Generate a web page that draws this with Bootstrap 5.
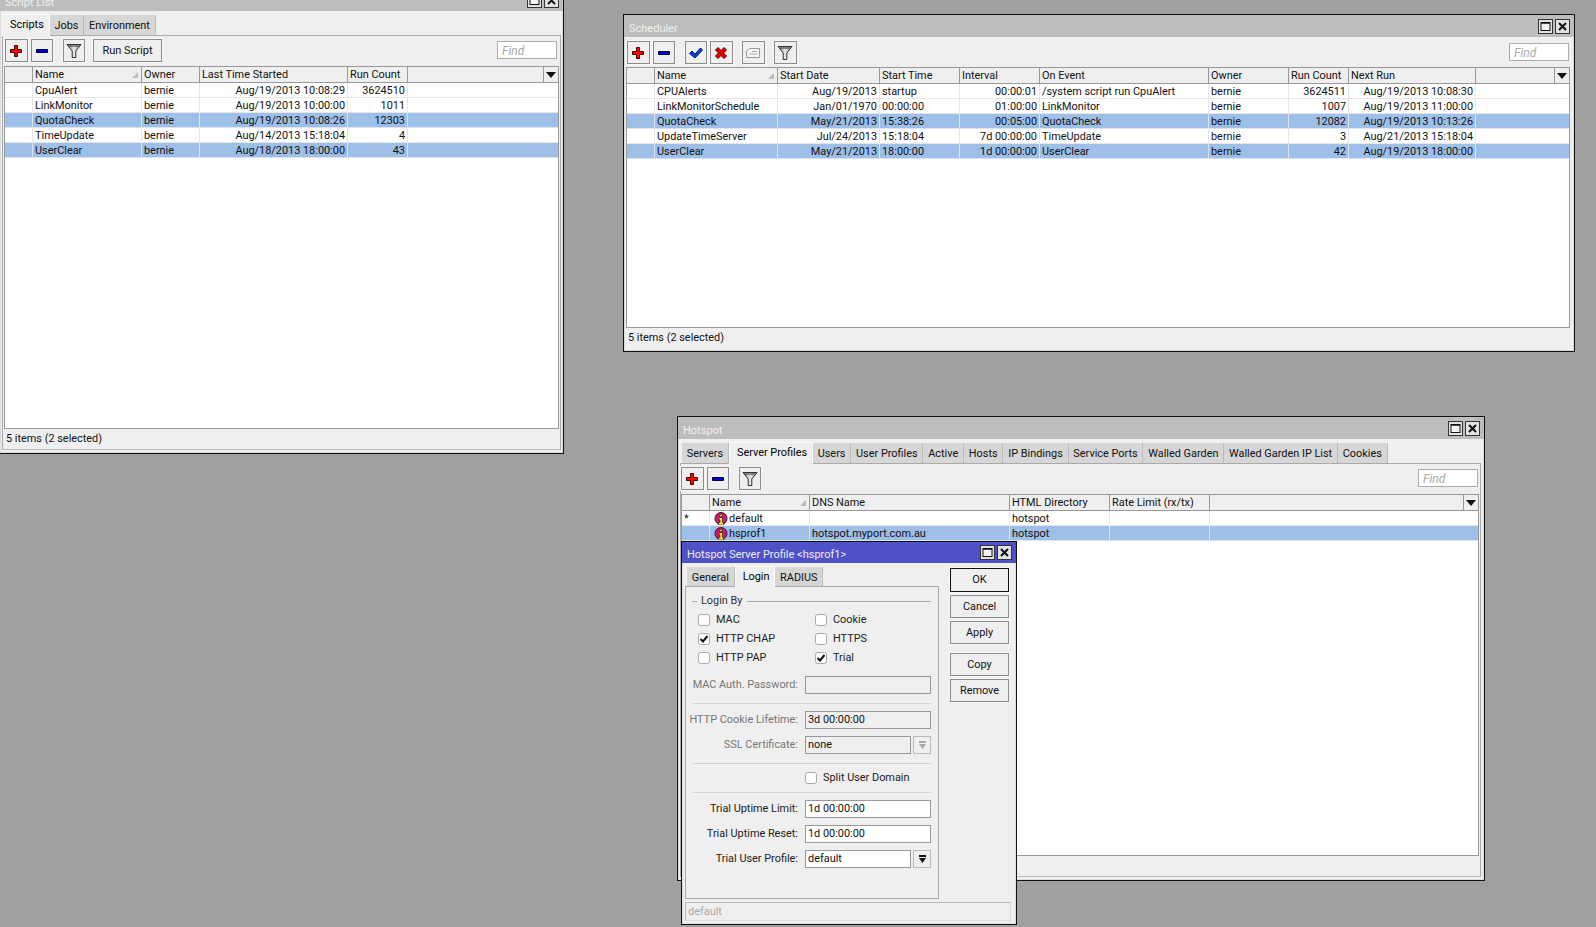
<!DOCTYPE html>
<html lang="en"><head><meta charset="utf-8"><title>Winbox</title>
<link href="https://cdn.jsdelivr.net/npm/bootstrap@5.3.0/dist/css/bootstrap.min.css" rel="stylesheet">
<style>
html,body{height:927px;overflow:hidden}
body{background:#a0a0a0;font:10.9px/14px Roboto,"Liberation Sans",sans-serif;color:#111;position:relative}
.win{position:absolute;background:#efefef;border:1px solid #111;box-shadow:inset 0 0 0 1px #dcdcdc}
.win-script{left:-1px;top:-12px;width:565px;height:466px}
.win-sched{left:623px;top:14px;width:952px;height:338px}
.win-hot{left:677px;top:416px;width:808px;height:465px}
.win-dlg{left:681px;top:541px;width:336px;height:384px;z-index:5}
.tbar{height:22px;background:#bdbdbd;color:#f0f0f0;font-size:11px;padding:0 4px 0 5px;flex:none}
.tbar>span:first-child{padding-top:5px}
.tbar-active{height:21px;background:#4f51c6;color:#eee}
.tbar-active>span:first-child{padding-top:4px}
.wbtn{width:15px;height:15px;padding:0;border:1px solid #333;background:#e2e2e2;margin-left:2px;display:flex;align-items:center;justify-content:center;border-radius:0}
.wbtn svg{display:block}
.wtabs{border:0;flex:none;height:22px;margin-top:2px;--bs-nav-tabs-border-width:0}
.wtabs .nav-link{height:20px;line-height:22px;padding:0 4.8px;margin:0;background:#d6d6d6;color:#111;border:0;border-right:1px solid #bbb;border-radius:0;font-size:10.9px;white-space:nowrap}
.wtabs .nav-link.active{height:22px;line-height:20px;background:#efefef;border:1px solid #fafafa;border-bottom:0;position:relative;z-index:1;margin-bottom:-1px;padding:0 4.8px 0 7px}
.tabpanel{border:1px solid #aaa;border-bottom-color:#bbb;min-height:0}
.tools{flex:none;height:23px;gap:3px}
.tl{width:22.5px;height:23px;padding:0;background:#efefef;border:1px solid #8c8c8c;border-radius:0;box-shadow:0 0 0 1px #f8f8f8;display:flex;align-items:center;justify-content:center;color:#111;font-size:11px;flex:none}
.tl-sp{margin-left:6.5px}
.tl-text{width:69px;margin-left:5px;padding-top:1px}
.findbox{width:60px;height:18px;border:1px solid #aaa;background:#fff;color:#aaa;font-style:italic;font-size:12px;line-height:18px;padding:0 4px;margin-top:2px;flex:none}
.lstwrap{background:#fff;border:1px solid #999;min-height:0;overflow:hidden}
.lst{width:100%;table-layout:fixed;margin:0;--bs-table-bg:transparent;border-collapse:separate;border-spacing:0}
.lst th,.lst td{padding:1px 2px 0;height:15px;line-height:13px;font-weight:400;color:#111;border-bottom:1px solid #e6e6e6;border-right:1px solid #e6e6e6;white-space:nowrap;overflow:hidden}
.lst th{height:16px;background:#efefef;border-bottom:1px solid #999;border-right:1px solid #999;line-height:14px}
.lst th:last-child,.lst td:last-child{border-right:0}
.lst tr.chosen td{background:#9dbfe8;border-color:#dbe5f2}
.sortmark{float:right;margin-top:4px}
.hdrop{float:right;width:15px;height:15px;margin:-1px -2px 0 0;border-left:1px solid #999;display:flex;align-items:center;justify-content:center}
.stbar{flex:none;height:20px;line-height:19px;padding-left:2px}
.c28{width:28px}
.c58{width:58px}.c60{width:60px}.c80{width:80px}.c100{width:100px}.c102{width:102px}.c109{width:109px}.c123{width:123px}.c127{width:127px}.c148{width:148px}.c169{width:169px}.c200{width:200px}
.inf{vertical-align:middle;margin:-3px 1px -2px 2px}
.dlgbtns{width:59px;margin-left:11px;gap:3px;padding-top:5px;flex:none}
.dbtn{height:23px;padding:0;border:1px solid #8c8c8c;background:#efefef;border-radius:0;font-size:10.9px;color:#111;line-height:20px;box-shadow:0 0 0 1px #f8f8f8;flex:none}
.dbtn-def{height:24px;border-color:#111}
.dbtn-sp{margin-top:6px}
.dlgleft{width:254px;flex:none}
.dlgpanel{border:1px solid #aaa;height:314px;padding:7px 0 0;margin-top:-1px}
.lgnd{height:14px;margin:0 7px 2px 6px;gap:4px;color:#333;flex:none}
.lgnd i{height:1px;background:#aaa;display:block}
.lgnd .dash{width:5px;flex:none}
.chkgrid{display:grid;grid-template-columns:117px 100px;margin-left:12px;grid-auto-rows:19px;margin-bottom:9px;flex:none}
.chkitem{display:flex;align-items:center;gap:6px;color:#222}
.chk{width:12px;height:12px;margin:0;border:1px solid #aaa;border-radius:0;background-color:#fff;flex:none;box-shadow:none}
.chk:checked{background-color:#fff;border-color:#aaa;background-image:url("data:image/svg+xml,%3Csvg xmlns='http://www.w3.org/2000/svg' viewBox='0 0 12 12'%3E%3Cpath d='M2.5 6l2.5 2.5L9.5 3' fill='none' stroke='%23111' stroke-width='2'/%3E%3C/svg%3E");background-size:12px}
.frow{height:18px;margin-bottom:7px;flex:none}
.flab{width:112px;text-align:right;color:#222;flex:none;margin-right:7px;white-space:nowrap}
.flab-off{color:#777}
.ffield{width:126px;height:18px;padding:0 2px;border:1px solid #999;border-radius:0;background:#fff;color:#111;font-size:10.9px;line-height:16px;flex:none}
.ffield-off{background:#efefef}
.ffield-s{width:106px}
.fdrop{width:18px;height:18px;margin-left:2px;background:#efefef;border:1px solid #bbb;display:flex;align-items:center;justify-content:center;flex:none}
.dsep{height:1px;background:#d4d4d4;margin:2px 7px 7px;flex:none}
.splitrow{height:13px;margin-bottom:6px;margin-left:119px;gap:6px;color:#222;flex:none}
.dlgstatus{height:19px;margin:3px 5px 3px 3px;border:1px solid #ddd;border-left-color:#bbb;border-top-color:#bbb;color:#aaa;line-height:18px;padding-left:2px;flex:none}
.ps-sc{padding-left:2px}
.panel-sc{margin:0 2px 3px 2px;padding:0 1px}
.panel-sc .tools{margin:0 2px 0 1px}
.panel-sc .tools .tools{margin:0}
.mt-pan{margin-top:3px}
.panel-sc .mt-pan{margin-top:3px}
.mt-lst{margin-top:4px}
.body-sched{padding:4px 4px 3px 2px}
.body-sched>.tools{margin:0 1px}
.mt-lst2{margin-top:3px}
.ps-hot{padding-left:4px}
.panel-hot{margin:0 3px 3px 2px;padding:0 1px 0 0}
.panel-hot>.tools{margin-right:1px}
.dlgmain{padding:0 0 0 3px;min-height:0}
.ps-dlg{padding-left:2px}
</style></head>
<body>
<svg width="0" height="0" class="position-absolute">
<defs>
<linearGradient id="fg" x1="0" y1="0" x2="1" y2="0"><stop offset="0" stop-color="#5f6f80"/><stop offset=".5" stop-color="#e8ecef"/><stop offset="1" stop-color="#6f7f8f"/></linearGradient>
<symbol id="i-plus" viewBox="0 0 16 16"><path d="M6.500 2.500h3v4h4v3h-4v4h-3v-4h-4v-3h4z" fill="#f00" stroke="#400" stroke-width="1"/></symbol>
<symbol id="i-minus" viewBox="0 0 16 16"><path d="M2.500 6.500h11v3h-11z" fill="#00d" stroke="#003" stroke-width="1"/></symbol>
<symbol id="i-check" viewBox="0 0 16 16"><path d="M1.500 8.500l2.500-2.500 3 3 5.500-6 2 2L7 13z" fill="#0a3cd8" stroke="#001a66" stroke-width="1"/></symbol>
<symbol id="i-x" viewBox="0 0 16 16"><path d="M2.500 5l2.500-2.500 3 3 3-3L13.500 5l-3 3 3 3-2.500 2.500-3-3-3 3L2.500 11l3-3z" fill="#e80000" stroke="#500" stroke-width="1"/></symbol>
<symbol id="i-note" viewBox="0 0 16 16"><path d="M1.500 6l3-2.500h10v9h-13z" fill="#f5f5f5" stroke="#999"/><path d="M7 6.500h5M4 9h8" stroke="#aaa"/></symbol>
<symbol id="i-filter" viewBox="0 0 16 16"><path d="M1 1.500h14L9.800 8v6.500H6.200V8z" fill="url(#fg)" stroke="#333" stroke-width="1"/><path d="M3.500 3h9" stroke="#333"/></symbol>
<symbol id="i-max" viewBox="0 0 11 11"><rect x="1" y="1.500" width="9" height="8" fill="#f2f2f2" stroke="#111"/><path d="M1 2h9" stroke="#111" stroke-width="1.500"/></symbol>
<symbol id="i-close" viewBox="0 0 11 11"><path d="M2 2l7 7M9 2l-7 7" stroke="#111" stroke-width="2"/></symbol>
<symbol id="i-info" viewBox="0 0 14 14"><circle cx="7" cy="6.500" r="6" fill="#d0187c" stroke="#4a0a2c"/><path d="M5.500 2.500h3v2h-3zM5 5.500h3.500v5h1.200V13H4.300v-2.500H6V8H5z" fill="#ffe22a" stroke="#222" stroke-width=".7"/></symbol>
</defs></svg>

<!-- Script List -->
<section class="win win-script d-flex flex-column">
 <div class="tbar d-flex align-items-center justify-content-between"><span>Script List</span><span class="d-flex"><span class="wbtn"><svg width="11" height="11"><use href="#i-max"/></svg></span><span class="wbtn"><svg width="11" height="11"><use href="#i-close"/></svg></span></span></div>
 <ul class="nav nav-tabs wtabs align-items-end ps-sc">
  <li class="nav-item"><a class="nav-link active" href="#">Scripts</a></li>
  <li class="nav-item"><a class="nav-link" href="#">Jobs</a></li>
  <li class="nav-item"><a class="nav-link" href="#">Environment</a></li>
 </ul>
 <div class="tabpanel flex-grow-1 d-flex flex-column panel-sc">
  <div class="d-flex tools justify-content-between mt-pan">
   <div class="d-flex tools">
    <button class="btn tl"><svg width="16" height="16"><use href="#i-plus"/></svg></button>
    <button class="btn tl"><svg width="16" height="16"><use href="#i-minus"/></svg></button>
    <button class="btn tl tl-sp"><svg width="16" height="16"><use href="#i-filter"/></svg></button>
    <button class="btn tl tl-sp tl-text">Run Script</button>
   </div>
   <div class="findbox">Find</div>
  </div>
  <div class="lstwrap flex-grow-1 mt-lst">
   <table class="table lst">
    <colgroup><col class="c28"><col class="c109"><col class="c58"><col class="c148"><col class="c60"><col></colgroup>
    <thead><tr><th></th><th>Name<svg class="sortmark" width="7" height="6"><path d="M6 0v6H0z" fill="#bbb"/></svg></th><th>Owner</th><th>Last Time Started</th><th>Run Count</th><th><span class="hdrop"><svg width="10" height="6"><path d="M0 0h10L5 6z" fill="#111"/></svg></span></th></tr></thead>
    <tbody>
     <tr><td></td><td>CpuAlert</td><td>bernie</td><td class="text-end">Aug/19/2013 10:08:29</td><td class="text-end">3624510</td><td></td></tr>
     <tr><td></td><td>LinkMonitor</td><td>bernie</td><td class="text-end">Aug/19/2013 10:00:00</td><td class="text-end">1011</td><td></td></tr>
     <tr class="chosen"><td></td><td>QuotaCheck</td><td>bernie</td><td class="text-end">Aug/19/2013 10:08:26</td><td class="text-end">12303</td><td></td></tr>
     <tr><td></td><td>TimeUpdate</td><td>bernie</td><td class="text-end">Aug/14/2013 15:18:04</td><td class="text-end">4</td><td></td></tr>
     <tr class="chosen"><td></td><td>UserClear</td><td>bernie</td><td class="text-end">Aug/18/2013 18:00:00</td><td class="text-end">43</td><td></td></tr>
    </tbody>
   </table>
  </div>
  <div class="stbar">5 items (2 selected)</div>
 </div>
</section>

<!-- Scheduler -->
<section class="win win-sched d-flex flex-column">
 <div class="tbar d-flex align-items-center justify-content-between"><span>Scheduler</span><span class="d-flex"><span class="wbtn"><svg width="11" height="11"><use href="#i-max"/></svg></span><span class="wbtn"><svg width="11" height="11"><use href="#i-close"/></svg></span></span></div>
 <div class="d-flex flex-column flex-grow-1 body-sched">
  <div class="d-flex tools justify-content-between">
   <div class="d-flex tools">
    <button class="btn tl"><svg width="16" height="16"><use href="#i-plus"/></svg></button>
    <button class="btn tl"><svg width="16" height="16"><use href="#i-minus"/></svg></button>
    <button class="btn tl tl-sp"><svg width="16" height="16"><use href="#i-check"/></svg></button>
    <button class="btn tl"><svg width="16" height="16"><use href="#i-x"/></svg></button>
    <button class="btn tl tl-sp"><svg width="16" height="16"><use href="#i-note"/></svg></button>
    <button class="btn tl tl-sp"><svg width="16" height="16"><use href="#i-filter"/></svg></button>
   </div>
   <div class="findbox">Find</div>
  </div>
  <div class="lstwrap flex-grow-1 mt-lst2">
   <table class="table lst">
    <colgroup><col class="c28"><col class="c123"><col class="c102"><col class="c80"><col class="c80"><col class="c169"><col class="c80"><col class="c60"><col class="c127"><col></colgroup>
    <thead><tr><th></th><th>Name<svg class="sortmark" width="7" height="6"><path d="M6 0v6H0z" fill="#bbb"/></svg></th><th>Start Date</th><th>Start Time</th><th>Interval</th><th>On Event</th><th>Owner</th><th>Run Count</th><th>Next Run</th><th><span class="hdrop"><svg width="10" height="6"><path d="M0 0h10L5 6z" fill="#111"/></svg></span></th></tr></thead>
    <tbody>
     <tr><td></td><td>CPUAlerts</td><td class="text-end">Aug/19/2013</td><td>startup</td><td class="text-end">00:00:01</td><td>/system script run CpuAlert</td><td>bernie</td><td class="text-end">3624511</td><td class="text-end">Aug/19/2013 10:08:30</td><td></td></tr>
     <tr><td></td><td>LinkMonitorSchedule</td><td class="text-end">Jan/01/1970</td><td>00:00:00</td><td class="text-end">01:00:00</td><td>LinkMonitor</td><td>bernie</td><td class="text-end">1007</td><td class="text-end">Aug/19/2013 11:00:00</td><td></td></tr>
     <tr class="chosen"><td></td><td>QuotaCheck</td><td class="text-end">May/21/2013</td><td>15:38:26</td><td class="text-end">00:05:00</td><td>QuotaCheck</td><td>bernie</td><td class="text-end">12082</td><td class="text-end">Aug/19/2013 10:13:26</td><td></td></tr>
     <tr><td></td><td>UpdateTimeServer</td><td class="text-end">Jul/24/2013</td><td>15:18:04</td><td class="text-end">7d 00:00:00</td><td>TimeUpdate</td><td>bernie</td><td class="text-end">3</td><td class="text-end">Aug/21/2013 15:18:04</td><td></td></tr>
     <tr class="chosen"><td></td><td>UserClear</td><td class="text-end">May/21/2013</td><td>18:00:00</td><td class="text-end">1d 00:00:00</td><td>UserClear</td><td>bernie</td><td class="text-end">42</td><td class="text-end">Aug/19/2013 18:00:00</td><td></td></tr>
    </tbody>
   </table>
  </div>
  <div class="stbar">5 items (2 selected)</div>
 </div>
</section>

<!-- Hotspot -->
<section class="win win-hot d-flex flex-column">
 <div class="tbar d-flex align-items-center justify-content-between"><span>Hotspot</span><span class="d-flex"><span class="wbtn"><svg width="11" height="11"><use href="#i-max"/></svg></span><span class="wbtn"><svg width="11" height="11"><use href="#i-close"/></svg></span></span></div>
 <ul class="nav nav-tabs wtabs align-items-end ps-hot">
  <li class="nav-item"><a class="nav-link" href="#">Servers</a></li>
  <li class="nav-item"><a class="nav-link active" href="#">Server Profiles</a></li>
  <li class="nav-item"><a class="nav-link" href="#">Users</a></li>
  <li class="nav-item"><a class="nav-link" href="#">User Profiles</a></li>
  <li class="nav-item"><a class="nav-link" href="#">Active</a></li>
  <li class="nav-item"><a class="nav-link" href="#">Hosts</a></li>
  <li class="nav-item"><a class="nav-link" href="#">IP Bindings</a></li>
  <li class="nav-item"><a class="nav-link" href="#">Service Ports</a></li>
  <li class="nav-item"><a class="nav-link" href="#">Walled Garden</a></li>
  <li class="nav-item"><a class="nav-link" href="#">Walled Garden IP List</a></li>
  <li class="nav-item"><a class="nav-link" href="#">Cookies</a></li>
 </ul>
 <div class="tabpanel flex-grow-1 d-flex flex-column panel-hot">
  <div class="d-flex tools justify-content-between mt-pan">
   <div class="d-flex tools">
    <button class="btn tl"><svg width="16" height="16"><use href="#i-plus"/></svg></button>
    <button class="btn tl"><svg width="16" height="16"><use href="#i-minus"/></svg></button>
    <button class="btn tl tl-sp"><svg width="16" height="16"><use href="#i-filter"/></svg></button>
   </div>
   <div class="findbox">Find</div>
  </div>
  <div class="lstwrap flex-grow-1 mt-lst">
   <table class="table lst">
    <colgroup><col class="c28"><col class="c100"><col class="c200"><col class="c100"><col class="c100"><col></colgroup>
    <thead><tr><th></th><th>Name<svg class="sortmark" width="7" height="6"><path d="M6 0v6H0z" fill="#bbb"/></svg></th><th>DNS Name</th><th>HTML Directory</th><th>Rate Limit (rx/tx)</th><th><span class="hdrop"><svg width="10" height="6"><path d="M0 0h10L5 6z" fill="#111"/></svg></span></th></tr></thead>
    <tbody>
     <tr><td>*</td><td><svg class="inf" width="14" height="14"><use href="#i-info"/></svg>default</td><td></td><td>hotspot</td><td></td><td></td></tr>
     <tr class="chosen"><td></td><td><svg class="inf" width="14" height="14"><use href="#i-info"/></svg>hsprof1</td><td>hotspot.myport.com.au</td><td>hotspot</td><td></td><td></td></tr>
    </tbody>
   </table>
  </div>
  <div class="stbar"></div>
 </div>
</section>

<!-- Dialog -->
<section class="win win-dlg d-flex flex-column">
 <div class="tbar tbar-active d-flex align-items-center justify-content-between"><span>Hotspot Server Profile &lt;hsprof1&gt;</span><span class="d-flex"><span class="wbtn"><svg width="11" height="11"><use href="#i-max"/></svg></span><span class="wbtn"><svg width="11" height="11"><use href="#i-close"/></svg></span></span></div>
 <div class="d-flex flex-grow-1 dlgmain">
  <div class="dlgleft d-flex flex-column">
   <ul class="nav nav-tabs wtabs align-items-end ps-dlg">
    <li class="nav-item"><a class="nav-link" href="#">General</a></li>
    <li class="nav-item"><a class="nav-link active" href="#">Login</a></li>
    <li class="nav-item"><a class="nav-link" href="#">RADIUS</a></li>
   </ul>
   <div class="dlgpanel d-flex flex-column">
    <div class="lgnd d-flex align-items-center"><i class="dash"></i><span>Login By</span><i class="flex-grow-1"></i></div>
    <div class="chkgrid">
     <label class="chkitem"><input class="form-check-input chk" type="checkbox">MAC</label>
     <label class="chkitem"><input class="form-check-input chk" type="checkbox">Cookie</label>
     <label class="chkitem"><input class="form-check-input chk" type="checkbox" checked>HTTP CHAP</label>
     <label class="chkitem"><input class="form-check-input chk" type="checkbox">HTTPS</label>
     <label class="chkitem"><input class="form-check-input chk" type="checkbox">HTTP PAP</label>
     <label class="chkitem"><input class="form-check-input chk" type="checkbox" checked>Trial</label>
    </div>
    <div class="frow d-flex align-items-center"><span class="flab flab-off">MAC Auth. Password:</span><div class="ffield ffield-off"></div></div>
    <div class="dsep"></div>
    <div class="frow d-flex align-items-center"><span class="flab flab-off">HTTP Cookie Lifetime:</span><div class="ffield ffield-off">3d 00:00:00</div></div>
    <div class="frow d-flex align-items-center"><span class="flab flab-off">SSL Certificate:</span><div class="ffield ffield-off ffield-s">none</div><span class="fdrop"><svg width="9" height="9"><path d="M1 0h7v2H1zM1 3h7L4.500 8z" fill="#aaa"/></svg></span></div>
    <div class="dsep"></div>
    <label class="splitrow d-flex align-items-center"><input class="form-check-input chk" type="checkbox">Split User Domain</label>
    <div class="dsep"></div>
    <div class="frow d-flex align-items-center"><span class="flab">Trial Uptime Limit:</span><div class="ffield">1d 00:00:00</div></div>
    <div class="frow d-flex align-items-center"><span class="flab">Trial Uptime Reset:</span><div class="ffield">1d 00:00:00</div></div>
    <div class="frow d-flex align-items-center"><span class="flab">Trial User Profile:</span><div class="ffield ffield-s">default</div><span class="fdrop"><svg width="9" height="9"><path d="M1 0h7v2H1zM1 3h7L4.500 8z" fill="#111"/></svg></span></div>
   </div>
  </div>
  <div class="dlgbtns d-flex flex-column">
   <button class="btn dbtn dbtn-def">OK</button>
   <button class="btn dbtn">Cancel</button>
   <button class="btn dbtn">Apply</button>
   <button class="btn dbtn dbtn-sp">Copy</button>
   <button class="btn dbtn">Remove</button>
  </div>
 </div>
 <div class="dlgstatus">default</div>
</section>
</body></html>
